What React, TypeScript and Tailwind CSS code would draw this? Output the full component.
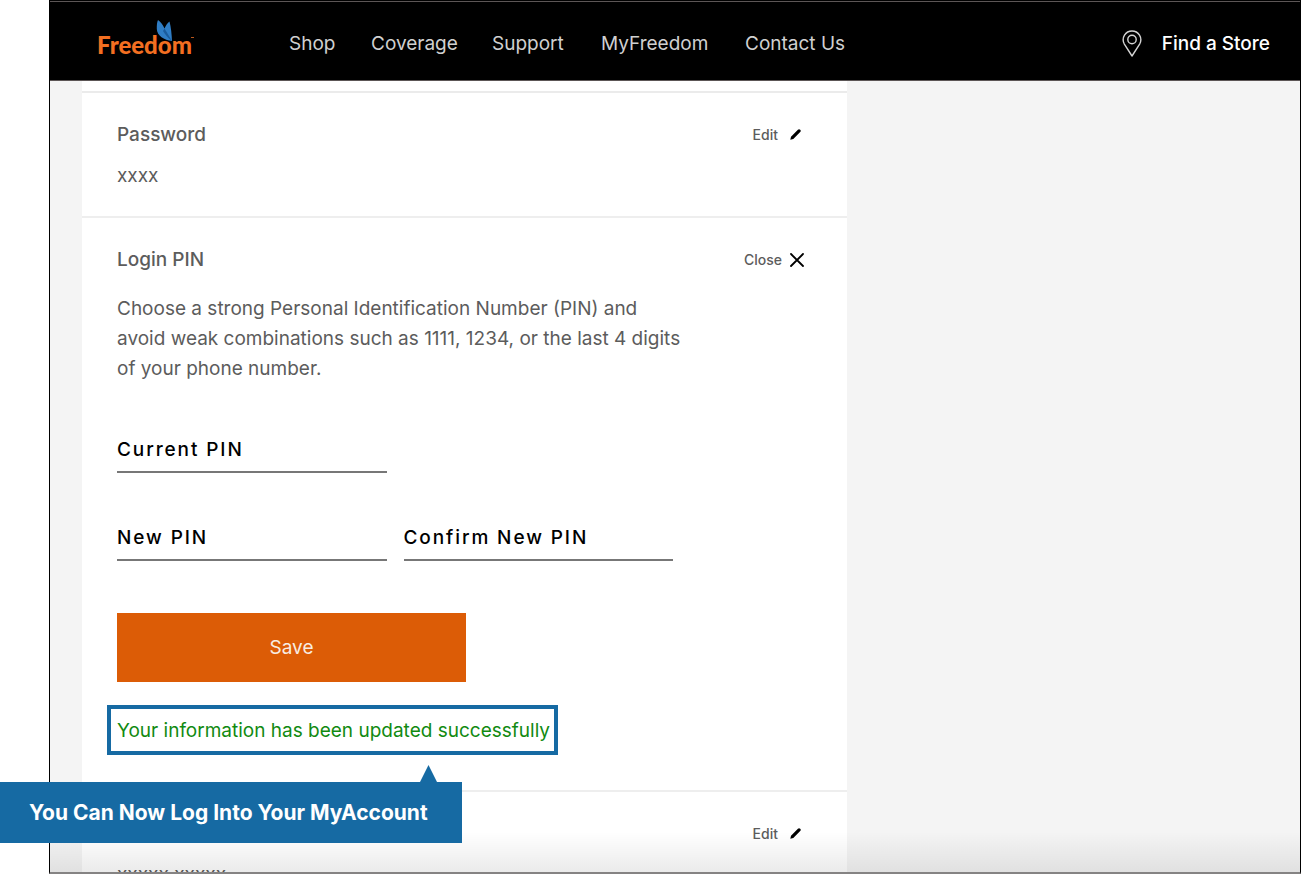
import { useState } from 'react';

const navLinks = [
  { label: 'Shop', width: 'w-[47px]' },
  { label: 'Coverage', width: 'w-[86px]' },
  { label: 'Support', width: 'w-[74px]' },
  { label: 'MyFreedom', width: 'w-[109px]' },
  { label: 'Contact Us', width: 'w-[101px]' },
];

function Logo() {
  return (
    <a href="#home" className="relative mt-1 w-[97px] font-[Lato,sans-serif] text-2xl font-black text-[#f36f21]">
      Freedom
      <svg className="absolute left-[59px] -top-[9px]" width="18" height="22" viewBox="0 0 18 22" aria-hidden="true">
        <path d="M2 0C5 2 7 5 8.5 8.5C10 5 11.5 3 13.5 1.5C15 7 15.8 15 16 21C8 20 1.2 16 0.8 9C0.7 5 1 2 2 0Z" fill="#2f7dc4" />
        <path d="M8.500 8.500L16 21C12 18 9 14.500 7 11Z" fill="#1b5c9c" />
      </svg>
      <svg className="absolute right-0 top-2" width="3" height="2" viewBox="0 0 3 2" aria-hidden="true">
        <path d="M0 0.5H3" stroke="#b9561c" />
      </svg>
    </a>
  );
}

function PinIcon() {
  return (
    <svg width="20" height="27" viewBox="0 0 20 27" fill="none" stroke="#d4d4d4" strokeWidth="1.4" aria-hidden="true">
      <path d="M10 26L2.2 13.8C-0.8 7.8 3.4 1 10 1S20.8 7.8 17.8 13.8Z" strokeLinejoin="round" />
      <circle cx="10" cy="9.5" r="4.2" />
    </svg>
  );
}

function EditButton() {
  return (
    <button type="button" className="flex items-center gap-3 pr-[11px] text-sm font-medium">
      Edit
      <svg width="11" height="11" viewBox="0 0 11 11" aria-hidden="true">
        <path d="M0.3 10.7L1 7.7L7.9 0.8Q9 -0.2 10.2 0.8Q11.3 2 10.2 3.1L3.3 10Z" fill="#000" />
      </svg>
    </button>
  );
}

function PinField({ id, label }: { id: string; label: string }) {
  const [value, setValue] = useState('');
  return (
    <div className="grid border-b-2 border-[#777] pb-2">
      <label htmlFor={id} className={`col-start-1 row-start-1 tracking-widest font-medium text-black ${value ? 'invisible' : ''}`}>
        {label}
      </label>
      <input
        id={id}
        type="password"
        value={value}
        onChange={(e) => setValue(e.target.value)}
        className="col-start-1 row-start-1 w-full bg-transparent outline-none"
      />
    </div>
  );
}

export default function App() {
  return (
    <div className="relative h-screen overflow-hidden bg-white font-[Inter,sans-serif] text-[19px] leading-[27px] text-[#5c5c5c]">
      <div className="relative ml-[49px] flex h-full flex-col overflow-hidden border border-b-2 border-black border-b-[#858383] bg-[#f4f4f4]">
        <header className="flex h-20 shrink-0 items-center border-y border-[#5c5656] bg-black pl-[47px] pr-[30px] pt-1 text-[#d0d0d0]">
          <Logo />
          <nav className="ml-[95px] flex gap-[35px] whitespace-nowrap">
            {navLinks.map((link) => (
              <a key={link.label} href="#nav" className={link.width}>{link.label}</a>
            ))}
          </nav>
          <a href="#stores" className="ml-auto flex items-center gap-5 whitespace-nowrap font-medium text-white">
            <PinIcon />
            Find a Store
          </a>
        </header>

        <main className="ml-8 w-full max-w-[765px] shrink-0 bg-white">
          <div className="h-[10px]" />

          {/* Password */}
          <section className="border-t-2 border-[#ebebeb] px-[35px] pb-[27px] pt-7">
            <div className="flex justify-between">
              <h2 className="font-medium">Password</h2>
              <EditButton />
            </div>
            <p className="mt-[14px]">xxxx</p>
          </section>

          {/* Login PIN */}
          <section className="border-t-2 border-[#eeeeee] px-[35px] pb-[35px] pt-7">
            <div className="flex justify-between">
              <h2 className="font-medium">Login PIN</h2>
              <button type="button" className="flex items-center gap-2 pr-2 text-sm font-medium">
                Close
                <svg width="14" height="14" viewBox="0 0 14 14" stroke="#000" strokeWidth="1.8" strokeLinecap="round" aria-hidden="true">
                  <path d="M1 1L13 13M13 1L1 13" />
                </svg>
              </button>
            </div>
            <p className="mt-[21px] max-w-[570px] leading-[30px]">
              Choose a strong Personal Identification Number (PIN) and avoid weak combinations such as 1111, 1234, or the last 4 digits of your phone number.
            </p>

            <form onSubmit={(e) => e.preventDefault()}>
              <div className="mt-[52px] grid max-w-[556px] grid-cols-2 gap-x-[17px] gap-y-[51px]">
                <div className="col-span-2 grid grid-cols-2 gap-x-[17px]">
                  <PinField id="current-pin" label="Current PIN" />
                </div>
                <PinField id="new-pin" label="New PIN" />
                <PinField id="confirm-pin" label="Confirm New PIN" />
              </div>
              <button type="submit" className="mt-[52px] block h-[69px] w-full max-w-[349px] bg-[#dc5c06] text-[#f8ece2]">
                Save
              </button>
            </form>

            <p role="status" className="-ml-[10px] mt-[23px] flex h-[50px] w-full max-w-[451px] items-center whitespace-nowrap border-4 border-[#166aa3] px-[6px] text-[#118a11]">
              Your information has been updated successfully
            </p>
          </section>

          <section className="border-t-2 border-[#eeeeee] px-[35px] pt-7">
            <div className="flex h-[27px] justify-end">
              <EditButton />
            </div>
            <p className="mt-[14px]">xxxxx xxxxx</p>
          </section>
        </main>

        <div className="pointer-events-none absolute inset-x-0 bottom-0 h-10 bg-linear-to-t from-black/8 to-transparent" />
      </div>

      {/* Callout */}
      <div className="absolute left-0 top-[782px] flex h-[61px] w-[462px] items-center whitespace-nowrap bg-[#166aa3] pl-[29px] text-[21px] font-bold text-white">
        <svg className="absolute -top-[17px] left-[420px]" width="17" height="17" viewBox="0 0 17 17" aria-hidden="true">
          <path d="M8.5 0L17 17H0Z" fill="#166aa3" />
        </svg>
        You Can Now Log Into Your MyAccount
      </div>
    </div>
  );
}
